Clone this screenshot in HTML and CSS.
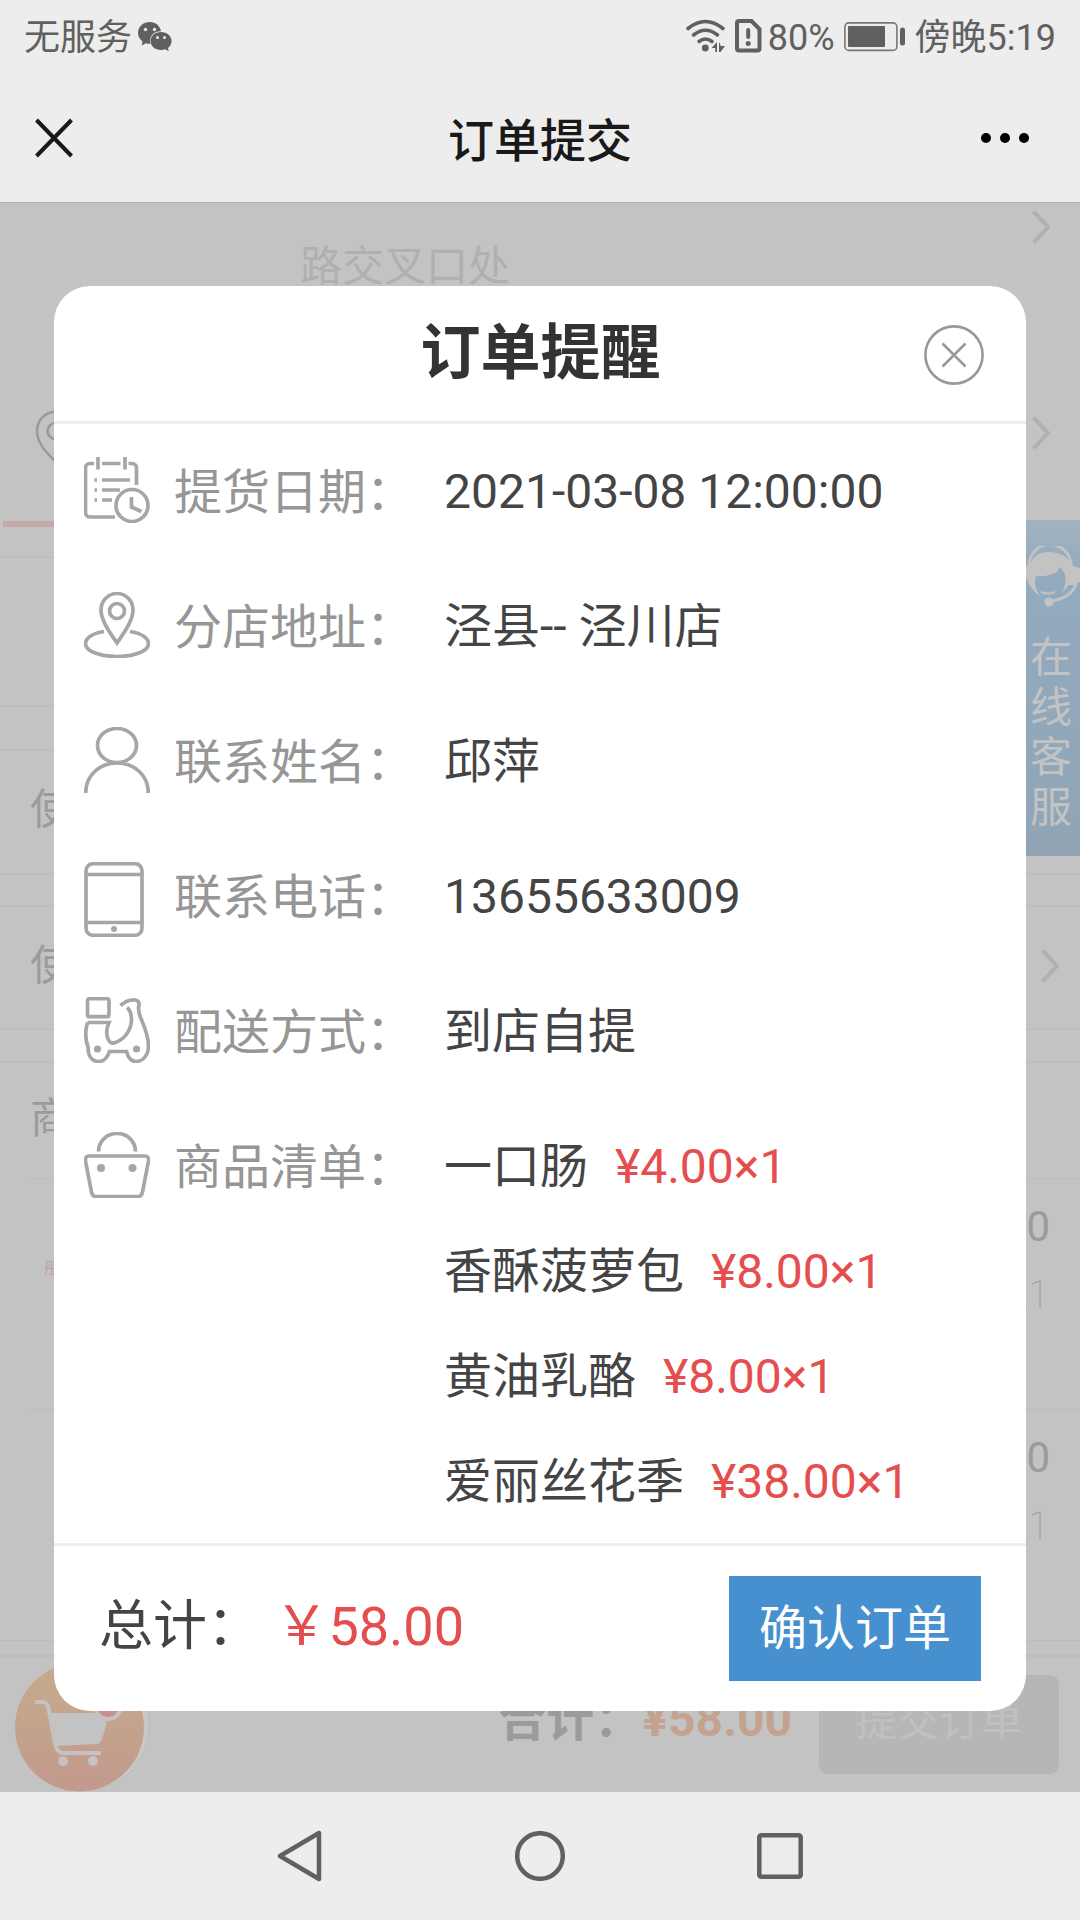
FILE: index.html
```html
<!doctype html>
<html lang="zh-CN">
  <head>
    <meta charset="UTF-8" />
    <meta name="viewport" content="width=device-width, initial-scale=1.0" />
    <title>订单提交</title>
    <link rel="stylesheet" href="styles.css">
  </head>
  <body>
    <div class="status-bar">
      <div class="status-left">
        <span>无服务</span>
        <svg class="wechat" width="34" height="30" viewBox="0 0 34 30">
          <path fill="#606060" d="M12 0C5 0 0 4.800 0 11c0 3.500 1.800 6.500 4.600 8.600L3.500 23.500l4.400-2.300c1.300.4 2.700.6 4.100.6h.3C10.500 14.500 16 9 23 9.300 22 3.800 17.500 0 12 0z" />
          <path fill="#606060" d="M23 10c6 0 10.600 4 10.600 9 0 3-1.500 5.400-3.700 7l.8 3.200-3.500-1.900c-1.300.4-2.700.6-4.200.6-6 0-10.500-4-10.500-9S17 10 23 10z" />
          <g fill="#ededed">
            <circle cx="7.500" cy="7.500" r="1.700" />
            <circle cx="16.500" cy="7.500" r="1.700" />
            <circle cx="19.500" cy="15.500" r="1.500" />
            <circle cx="26.500" cy="15.500" r="1.500" />
          </g>
        </svg>
      </div>
      <div class="status-right">
        <svg class="wifi" width="40" height="34" viewBox="0 0 40 34">
          <g fill="none" stroke="#606060" stroke-width="3.600" stroke-linecap="round">
            <path d="M2 9.500Q19.500-4.500 37 9.500" />
            <path d="M7.500 16Q19.500 6.500 31.500 16" />
            <path d="M13 22.500Q19.500 17.500 26 22.500" />
          </g>
          <circle cx="19.300" cy="29" r="3.400" fill="#606060" />
          <path fill="#606060" d="M31 23v10h-1.800v-4H25.500zM33 23l1.800 4H39l-4.500 6H33z" />
        </svg>
        <svg class="sim" width="27" height="34" viewBox="0 0 27 34">
          <path d="M4 2h12.500L24.500 10v19.500a2 2 0 0 1-2 2H4a2 2 0 0 1-2-2V4a2 2 0 0 1 2-2z" fill="none" stroke="#606060" stroke-width="4" />
          <path d="M13.200 11v7" stroke="#606060" stroke-width="4" stroke-linecap="round" />
          <circle cx="13.200" cy="24.500" r="2.500" fill="#606060" />
        </svg>
        <span class="percent">80%</span>
        <svg class="battery" width="62" height="30" viewBox="0 0 62 30">
          <rect x="0.900" y="0.900" width="52" height="27.500" rx="4" fill="none" stroke="#777" stroke-width="1.600" />
          <rect x="4" y="4" width="37" height="21" rx="1" fill="#606060" />
          <rect x="56" y="5.500" width="5" height="18" rx="2.500" fill="#606060" />
        </svg>
        <span>傍晚5:19</span>
      </div>
    </div>

    <header class="nav-bar">
      <svg width="38" height="40" viewBox="0 0 38 40">
        <path d="M1.500 2L36.500 38M36.500 2L1.500 38" stroke="#191919" stroke-width="4" />
      </svg>
      <h1>订单提交</h1>
      <svg width="50" height="12" viewBox="0 0 50 12">
        <circle cx="6" cy="6" r="5" />
        <circle cx="25" cy="6" r="5" />
        <circle cx="44" cy="6" r="5" />
      </svg>
    </header>

    <main class="page">
      <section class="address">
        <div class="address-row">
          <p>路交叉口处</p>
          <svg class="arrow" width="18" height="34" viewBox="0 0 18 34"><path d="M1.500 1.500L16 17L1.500 32.500" /></svg>
        </div>
        <div class="address-row">
          <svg class="pin" width="40" height="54" viewBox="0 0 40 54">
            <path d="M19 51C11 43 1 34 1 21a18 19 0 0 1 36 0C37 34 27 43 19 51z" />
            <circle cx="19.500" cy="21" r="8" />
          </svg>
          <svg class="arrow" width="18" height="34" viewBox="0 0 18 34"><path d="M1.500 1.500L16 17L1.500 32.500" /></svg>
        </div>
        <div class="stripe"></div>
      </section>
      <section class="block"></section>
      <section class="cell first"><span>使用优惠券</span></section>
      <section class="cell">
        <span>使用余额</span>
        <svg class="arrow" width="18" height="34" viewBox="0 0 18 34"><path d="M1.500 1.500L16 17L1.500 32.500" /></svg>
      </section>
      <section class="cell goods-title"><span>商品信息</span></section>
      <section class="goods">
        <span class="goods-brand">彤</span>
        <div class="goods-price"><span>¥8.00</span><small>×1</small></div>
      </section>
      <section class="goods">
        <div class="goods-price"><span>¥38.00</span><small>×1</small></div>
      </section>
      <footer class="pay-bar">
        <strong>合计：</strong>
        <strong class="pay-sum">¥58.00</strong>
        <button class="pay-button">提交订单</button>
      </footer>

      <aside class="service">
        <svg width="54" height="62" viewBox="0 0 54 62">
          <path d="M3 20a21 21 0 0 1 42-1M50 37q-3 14-24 18" fill="none" stroke="#c3c3c3" stroke-width="3" />
          <path fill="#c3c3c3" d="M0 20h3Q8 6 22 6q18 0 25 14l7 2v14l-7 3h-4l-7 8q5-10 3-19l-5-7-3 5q-8 5-21 4-2 6 0 12l4 9Q3 41 0 31z" />
          <circle cx="23" cy="56" r="4.500" fill="#c3c3c3" />
          <path d="M15 46q7 3 14 0" fill="none" stroke="#c3c3c3" stroke-width="2" />
        </svg>
        <span>在线客服</span>
      </aside>

      <svg class="cart" width="140" height="132" viewBox="0 0 140 132">
        <defs>
          <linearGradient id="cartFill" x1="0" y1="0" x2="0" y2="1">
            <stop offset="0" stop-color="#c4ac8c" />
            <stop offset="1" stop-color="#c3998d" />
          </linearGradient>
        </defs>
        <circle cx="70" cy="66" r="64.500" fill="#c8c8c8" stroke="#bcbcbc" />
        <circle cx="64.500" cy="67" r="64.500" fill="url(#cartFill)" />
        <path d="M20 42h8q4 0 5.500 6L40 84q2 9 9 9h37" fill="none" stroke="#c3c3c3" stroke-width="4" />
        <path fill="#c3c3c3" d="M35 53h44l13 9-5 17q-2 5-5 5l-42 2z" />
        <circle cx="48" cy="101" r="5" fill="#c3c3c3" />
        <circle cx="78" cy="101" r="5" fill="#c3c3c3" />
        <circle cx="93" cy="46" r="15" fill="#c6c2c2" />
        <circle cx="93" cy="46" r="11" fill="#c89092" />
      </svg>

      <!-- 订单提醒弹窗 -->
      <div class="modal">
        <div class="modal-header">
          <h2>订单提醒</h2>
          <svg class="modal-close" width="60" height="60" viewBox="0 0 60 60">
            <circle cx="30" cy="30" r="28.600" />
            <path d="M18.500 18.500l23 23M41.500 18.500l-23 23" />
          </svg>
        </div>

        <ul class="info">
          <li>
            <svg class="icon" width="66" height="66" viewBox="0 0 66 66">
              <path d="M10 6.500H6a4.500 4.500 0 0 0-4.500 4.500v44.500a4.500 4.500 0 0 0 4.500 4.500h25M18 6.500h18.500M44.500 6.500H48a4.500 4.500 0 0 1 4.500 4.500v17M14 0v12.500M41 0v12.500" />
              <path d="M18 23h28M18 33h18M18 43h10M10.500 23h2.500M10.500 33h2.500M10.500 43h2.500" />
              <circle cx="48" cy="48.500" r="16" />
              <path d="M47.500 40v10l10 4.500" />
            </svg>
            <span class="label">提货日期：</span>
            <span class="value">2021-03-08 12:00:00</span>
          </li>
          <li>
            <svg class="icon" width="66" height="66" viewBox="0 0 66 66">
              <path d="M33 51C27 42 17 29 17 18a16 16.500 0 0 1 32 0C49 29 39 42 33 51z" />
              <circle cx="33" cy="19" r="7.500" />
              <path d="M20 39.500C9 41 1.500 46 1.500 51.500 1.500 59 15 64.500 33 64.500S64.500 59 64.500 51.500C64.500 46 57 41 46 39.500" />
            </svg>
            <span class="label">分店地址：</span>
            <span class="value">泾县-- 泾川店</span>
          </li>
          <li>
            <svg class="icon" width="66" height="66" viewBox="0 0 66 66">
              <ellipse cx="33" cy="18.500" rx="19.500" ry="17" />
              <path d="M1.700 66C1.700 48 16 36 33 36S64.300 48 64.300 66" />
            </svg>
            <span class="label">联系姓名：</span>
            <span class="value">邱萍</span>
          </li>
          <li>
            <svg class="icon" width="60" height="75" viewBox="0 0 60 75">
              <rect x="2" y="1.700" width="56" height="71.600" rx="7" />
              <path d="M2 12.500h56M2 60.500h56" />
              <circle class="dot" cx="30" cy="67" r="3" />
            </svg>
            <span class="label">联系电话：</span>
            <span class="value">13655633009</span>
          </li>
          <li>
            <svg class="icon" width="66" height="66" viewBox="0 0 66 66">
              <rect x="3.500" y="1.700" width="21.500" height="18" rx="2" />
              <path d="M3.500 25.500H25C22 32 22 37 24 42q2.500 5 6 4C40 43 47 34 47.500 23 47.500 18 46 13 43 10.500" />
              <path d="M36.500 8.500C41 4.500 46 2.500 51 3q4.500.5 4 5c-1 4-.5 7 1 11C60 29 65 39 64.500 50c-.5 9-6 14.500-12.500 14.500-5 0-8-4-9.500-10H25.500c-2 6-5 10-11 10C8 64.500 4 59 4 50 1 42 1 34 3.500 25.500" />
              <circle class="dot" cx="13.500" cy="52" r="3.600" />
              <circle class="dot" cx="52.500" cy="52" r="3.600" />
            </svg>
            <span class="label">配送方式：</span>
            <span class="value">到店自提</span>
          </li>
          <li class="list-row">
            <svg class="icon" width="66" height="66" viewBox="0 0 66 66">
              <path d="M14.500 19.500C14.500 9 23 1.500 33 1.500S51.500 9 51.500 19.500" />
              <path d="M5 24h56q4 0 3.500 5L58.500 60q-1 4.500-4 4.500h-43q-3 0-4-4.500L1.500 29Q1 24 5 24z" />
              <circle class="dot" cx="17" cy="36" r="4" />
              <circle class="dot" cx="48.500" cy="36" r="4" />
            </svg>
            <span class="label">商品清单：</span>
            <div class="products">
              <p>一口肠<em>¥4.00×1</em></p>
              <p>香酥菠萝包<em>¥8.00×1</em></p>
              <p>黄油乳酪<em>¥8.00×1</em></p>
              <p>爱丽丝花季<em>¥38.00×1</em></p>
            </div>
          </li>
        </ul>

        <div class="modal-footer">
          <p>总计： <em>￥58.00</em></p>
          <button class="confirm">确认订单</button>
        </div>
      </div>
    </main>

    <nav class="system-nav">
      <svg width="46" height="52" viewBox="0 0 46 52">
        <path d="M42 3v46L3 26z" />
      </svg>
      <svg width="50" height="50" viewBox="0 0 50 50">
        <circle cx="25" cy="25" r="22.800" />
      </svg>
      <svg width="46" height="46" viewBox="0 0 46 46">
        <rect x="2.300" y="2.300" width="41.400" height="41.400" rx="2" />
      </svg>
    </nav>
  </body>
</html>
```

FILE: styles.css
```css
* {
  box-sizing: border-box;
}
body {
  margin: 0;
  width: 1080px;
  height: 1920px;
  display: flex;
  flex-direction: column;
  overflow: hidden;
  background-color: #ededed;
  font-family: Roboto, "Noto Sans CJK SC", sans-serif;
}
h1,
h2,
p,
ul {
  margin: 0;
  padding: 0;
}
em {
  font-style: normal;
}
svg {
  flex: none;
}
button {
  border: none;
  padding: 0;
  font-family: inherit;
}

/* status bar */
.status-bar {
  height: 76px;
  padding: 0 24px;
  display: flex;
  justify-content: space-between;
  color: #606060;
  font-size: 36px;
  line-height: 77px;
}
.status-left,
.status-right {
  display: flex;
}
.wechat {
  margin: 22px 0 0 6px;
}
.wifi,
.sim {
  margin-top: 19px;
}
.sim {
  margin-left: 9px;
}
.percent {
  margin-left: 6px;
}
.battery {
  margin: 22px 9px 0 9px;
}

/* wechat title bar */
.nav-bar {
  height: 127px;
  padding: 0 50px 3px 35px;
  display: flex;
  align-items: center;
  justify-content: space-between;
  border-bottom: 1px solid #b0b0b0;
}
.nav-bar h1 {
  padding: 6px 0 0 27px;
  font-size: 46px;
  font-weight: 500;
  line-height: 60px;
  color: #191919;
}

/* page below the mask */
.page {
  position: relative;
  height: 1589px;
  overflow: hidden;
  background-color: #c3c3c3;
  color: #9b9b9b;
  font-size: 42px;
}
.arrow {
  fill: none;
  stroke: #b0b0b0;
  stroke-width: 4;
}
.address {
  height: 355px;
  border-bottom: 2px solid #bebebe;
}
.address-row {
  height: 167px;
  padding: 7px 30px 0 36px;
  display: flex;
  justify-content: space-between;
}
.address-row p {
  padding: 32px 0 0 264px;
  color: #b0b0b0;
  line-height: 50px;
}
.address-row + .address-row {
  height: 151px;
  padding-top: 46px;
}
.address-row + .address-row .pin {
  margin-top: -6px;
}
.pin {
  fill: none;
  stroke: #999;
  stroke-width: 2.5;
}
.stripe {
  height: 6px;
  margin-left: 3px;
  background-color: #c3a9a9;
}
.block {
  height: 149px;
  border-bottom: 2px solid #bebebe;
}
.cell {
  height: 125px;
  margin-top: 30px;
  padding: 0 21px 3px 30px;
  display: flex;
  align-items: center;
  justify-content: space-between;
  border-top: 2px solid #bebebe;
  border-bottom: 2px solid #bebebe;
}
.cell.first {
  height: 126px;
  margin-top: 42px;
  padding-bottom: 5px;
}
.cell span {
  line-height: 60px;
}
.cell.goods-title {
  height: 117px;
  margin-top: 31px;
  padding-bottom: 4px;
  border-bottom: none;
}
.goods {
  height: 231px;
  margin-left: 30px;
  padding: 18px 30px 0 14px;
  display: flex;
  border-top: 1px solid #bcbcbc;
}
.goods-brand {
  padding-top: 58px;
  color: #c0a09a;
  font-size: 16px;
}
.goods-price {
  margin-left: auto;
  display: flex;
  flex-direction: column;
  text-align: right;
  line-height: 60px;
}
.goods-price small {
  padding: 8px 1px 0 0;
  font-size: 38px;
  font-weight: 100;
}
.pay-bar {
  height: 152px;
  padding: 0 21px 0 0;
  display: flex;
  align-items: center;
  justify-content: flex-end;
  border-top: 1px solid #bcbcbc;
  background: linear-gradient(#bdbdbd, #bdbdbd) 0 13px / 100% 3px no-repeat;
  font-size: 48px;
  line-height: 60px;
}
.pay-bar strong {
  padding-top: 6px;
}
.pay-bar .pay-sum {
  margin-right: 27px;
  color: #c3a38f;
}
.pay-button {
  width: 240px;
  height: 99px;
  margin-top: 16px;
  padding-bottom: 6px;
  border-radius: 9px;
  background-color: #b6b6b6;
  color: #c0c0c0;
  font-size: 42px;
  line-height: 93px;
}

/* floating service tab and cart */
.service {
  position: absolute;
  top: 317px;
  right: 0;
  width: 54px;
  height: 336px;
  padding-top: 26px;
  background: linear-gradient(#a3b3bf, #93abc0 14%, #90a4b6);
  color: #c3c3c3;
}
.service span {
  display: block;
  width: 42px;
  margin: 15px 0 0 4px;
  line-height: 50px;
}
.cart {
  position: absolute;
  top: 1457px;
  left: 15px;
}

/* modal */
.modal {
  position: absolute;
  top: 83px;
  left: 54px;
  width: 972px;
  height: 1425px;
  border-radius: 36px;
  background-color: #fff;
  color: #444;
  font-size: 48px;
}
.modal-header {
  height: 138px;
  padding: 0 42px 0 102px;
  display: flex;
  align-items: center;
  justify-content: space-between;
  border-bottom: 3px solid #eee;
}
.modal-header h2 {
  flex: 1;
  padding-left: 1px;
  color: #333;
  font-size: 60px;
  line-height: 80px;
  text-align: center;
}
.modal-close {
  margin-top: 3px;
  fill: none;
  stroke: #999;
  stroke-width: 2.6;
}
.info {
  list-style: none;
}
.info li {
  height: 135px;
  padding-left: 30px;
  display: flex;
  line-height: 135px;
}
.info .icon {
  margin-top: 33px;
  fill: none;
  stroke: #a6a6a6;
  stroke-width: 3.7;
}
.icon .dot {
  fill: #a6a6a6;
  stroke: none;
}
.icon + .label {
  margin-left: 24px;
}
.icon[width="60"] + .label {
  margin-left: 30px;
}
.label {
  width: 270px;
  padding-top: 1px;
  color: #969696;
}
.info .list-row {
  height: 444px;
}
.products {
  padding-top: 15px;
  line-height: 105px;
}
.products em {
  margin-left: 27px;
}
.modal em {
  color: #e54e4e;
}
.modal-footer {
  height: 168px;
  padding: 0 45px;
  display: flex;
  align-items: center;
  justify-content: space-between;
  border-top: 3px solid #eee;
}
.modal-footer p {
  padding-bottom: 4px;
  font-size: 54px;
  line-height: 80px;
}
.confirm {
  width: 252px;
  height: 105px;
  background-color: #4690d0;
  color: #fff;
  font-size: 48px;
  line-height: 105px;
}

/* android keys */
.system-nav {
  height: 128px;
  padding: 0 277px;
  display: flex;
  align-items: center;
  justify-content: space-between;
  background-color: #ededed;
}
.system-nav svg {
  fill: none;
  stroke: #606060;
  stroke-width: 4.5;
  stroke-linejoin: round;
}
```
